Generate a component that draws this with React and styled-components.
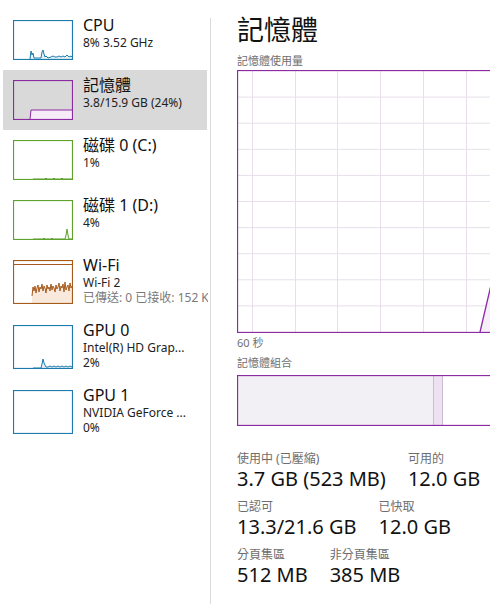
import React from 'react';
import styled, { createGlobalStyle } from 'styled-components';

const GlobalStyle = createGlobalStyle`
    html, body {
        margin: 0;
        padding: 0;
        overflow: hidden;
        background: #ffffff;
    }
    body {
        font-family: "Noto Sans", "Noto Sans CJK TC", sans-serif;
        color: #1a1a1a;
    }
`;

const Page = styled.div`
    display: flex;
    width: 490px;
    height: 604px;
    overflow: hidden;
`;

const Sidebar = styled.div`
    width: 205px;
    flex-shrink: 0;
    padding: 10px 0 0 3px;
    overflow: hidden;
`;

const Divider = styled.div`
    width: 1px;
    flex-shrink: 0;
    margin: 18px 0 0 2px;
    background: #dadada;
`;

const Row = styled.div`
    display: flex;
    align-items: flex-start;
    width: 204px;
    padding: 10px 0 10px 10px;
    box-sizing: border-box;
    background: ${(p) => (p.selected ? '#d9d9d9' : 'transparent')};
`;

const ThumbBox = styled.svg`
    flex-shrink: 0;
    display: block;
`;

const RowText = styled.div`
    margin: -5px 0 0 10px;
    white-space: nowrap;
    min-width: 0;
`;

const RowTitle = styled.div`
    font-size: 16px;
    line-height: 20px;
    color: #111;
`;

const RowSub = styled.div`
    font-size: 12px;
    line-height: 15px;
    color: ${(p) => (p.muted ? '#7a7a7a' : '#222')};
`;

const Main = styled.div`
    flex: 1;
    padding-left: 26px;
    min-width: 0;
`;

const Title = styled.h1`
    margin: 12px 0 0;
    font-size: 27px;
    line-height: 36px;
    font-weight: 400;
    color: #111;
`;

const Caption = styled.div`
    margin-top: ${(p) => p.gap || 0}px;
    font-size: 11px;
    line-height: 16px;
    color: #6f6f6f;
`;

const Chart = styled.svg`
    display: block;
    margin-top: ${(p) => p.gap || 0}px;
`;

const StatRow = styled.div`
    display: flex;
    gap: 22px;
    margin-top: ${(p) => p.gap}px;
`;

const Stat = styled.div`
    display: flex;
    flex-direction: column;
`;

const StatLabel = styled.div`
    font-size: 12px;
    line-height: 14px;
    color: #6d6d6d;
    white-space: nowrap;
`;

const StatValue = styled.div`
    font-size: 20px;
    line-height: 26px;
    color: #111;
    white-space: nowrap;
`;

const Thumb = ({ color, fill, h = 40, points, top }) => {
    const area = points ? `${points} 59,${h - 0.5} ${points.split(' ')[0].split(',')[0]},${h - 0.5}` : null;
    return (
        <ThumbBox width="60" height={h} viewBox={`0 0 60 ${h}`}>
            {area && <polygon points={area} fill={fill} />}
            {top && <line x1="0" y1={top} x2="60" y2={top} stroke={color} strokeWidth="1" />}
            {points && <polyline points={points} fill="none" stroke={color} strokeWidth="1" />}
            <rect x="0.5" y="0.5" width="59" height={h - 1} fill="none" stroke={color} strokeWidth="1.2" />
        </ThumbBox>
    );
};

const wifiPts = (() => {
    const ys = [36, 27, 31, 26, 33, 28, 25, 32, 27, 29, 24, 31, 26, 28, 33, 25, 29, 27, 31, 24, 30, 26, 28, 32, 25, 29, 27, 23, 31, 26, 28, 24, 32, 22, 30, 27, 25, 31, 23, 28, 26];
    return ys.map((y, i) => `${19 + i},${y}`).join(' ');
})();

const items = [
    {
        name: 'CPU',
        lines: ['8% 3.52 GHz'],
        color: '#1c7bab',
        fill: '#e6f1f8',
        points: '17,39 18,31 19,35 20,33 21,38 28,38 29,32 30,30 31,34 32,37 33,36 35,38 38,37 40,36 42,37 44,37 46,36 48,37 50,36 52,37 54,35 56,37 58,36 59,37',
    },
    {
        name: '記憶體',
        lines: ['3.8/15.9 GB (24%)'],
        color: '#8b2aa3',
        fill: '#f6ecf8',
        points: '17,39 18,30 59,30',
        selected: true,
    },
    {
        name: '磁碟 0 (C:)',
        lines: ['1%'],
        color: '#5fa12e',
        fill: '#eef6e7',
        points: '20,39 32,39 33,38 34,39 40,39 41,38 42,39 48,39 49,38 50,39 59,39',
    },
    {
        name: '磁碟 1 (D:)',
        lines: ['4%'],
        color: '#5fa12e',
        fill: '#eef6e7',
        points: '20,39 30,39 31,38 32,39 38,39 39,38 40,39 52,39 53,35 54,29 55,35 56,39 59,39',
    },
    {
        name: 'Wi-Fi',
        lines: ['Wi-Fi 2'],
        muted: '已傳送: 0 已接收: 152 Kbps',
        color: '#a65a1c',
        fill: '#f9e9dd',
        points: wifiPts,
        top: 4.5,
        h: 44,
    },
    {
        name: 'GPU 0',
        lines: ['Intel(R) HD Grap...', '2%'],
        color: '#1c7bab',
        fill: '#e6f1f8',
        points: '20,43 28,43 29,39 30,34 31,38 32,40 33,42 35,42 37,41 39,42 41,41 43,42 45,41 47,42 49,41 51,42 53,41 55,42 57,41 59,42',
        h: 44,
    },
    {
        name: 'GPU 1',
        lines: ['NVIDIA GeForce ...', '0%'],
        color: '#1c7bab',
        fill: '#e6f1f8',
        h: 44,
    },
];

const W = 300;
const H = 263;

const MemoryChart = () => {
    const vLines = [15, 58, 100, 143, 186, 229, 272];
    const hLines = Array.from({ length: 9 }, (_, i) => 1 + (i + 1) * 26.1);
    return (
        <Chart width={W} height={H} viewBox={`0 0 ${W} ${H}`} gap={1}>
            {vLines.map((x) => (
                <line key={x} x1={x + 0.5} y1="0" x2={x + 0.5} y2={H} stroke="#e7dfea" strokeWidth="1" />
            ))}
            {hLines.map((y) => (
                <line key={y} x1="0" y1={y} x2={W} y2={y} stroke="#e7dfea" strokeWidth="1" />
            ))}
            <polygon points={`243,${H - 1} 258,198 ${W},198 ${W},${H - 1}`} fill="#f6eef8" />
            <polyline points={`243,${H - 1} 258,198 ${W},198`} fill="none" stroke="#8b2aa3" strokeWidth="1.3" />
            <rect x="0.5" y="0.5" width={W - 1} height={H - 1} fill="none" stroke="#8b2aa3" strokeWidth="1.3" />
        </Chart>
    );
};

const Composition = () => (
    <Chart width={W} height="51" viewBox={`0 0 ${W} 51`} gap={4}>
        <rect x="0" y="0" width="196" height="51" fill="#f3f0f5" />
        <rect x="196" y="0" width="9" height="51" fill="#ede2f1" />
        <line x1="196.5" y1="0" x2="196.5" y2="51" stroke="#cdbad4" />
        <line x1="205.5" y1="0" x2="205.5" y2="51" stroke="#cdbad4" />
        <rect x="0.5" y="0.5" width={W - 1} height="50" fill="none" stroke="#8b2aa3" strokeWidth="1.3" />
    </Chart>
);

const stats = [
    { gap: 26, cols: [['使用中 (已壓縮)', '3.7 GB (523 MB)'], ['可用的', '12.0 GB']] },
    { gap: 8, cols: [['已認可', '13.3/21.6 GB'], ['已快取', '12.0 GB']] },
    { gap: 8, cols: [['分頁集區', '512 MB'], ['非分頁集區', '385 MB']] },
];

const App = () => {
    return (
        <Page>
            <GlobalStyle />
            <Sidebar>
                {items.map((item) => (
                    <Row key={item.name} selected={item.selected}>
                        <Thumb color={item.color} fill={item.fill} h={item.h} points={item.points} top={item.top} />
                        <RowText>
                            <RowTitle>{item.name}</RowTitle>
                            {item.lines.map((l) => (
                                <RowSub key={l}>{l}</RowSub>
                            ))}
                            {item.muted && <RowSub muted>{item.muted}</RowSub>}
                        </RowText>
                    </Row>
                ))}
            </Sidebar>
            <Divider />
            <Main>
                <Title>記憶體</Title>
                <Caption gap={5}>記憶體使用量</Caption>
                <MemoryChart />
                <Caption gap={2}>60 秒</Caption>
                <Caption gap={4}>記憶體組合</Caption>
                <Composition />
                {stats.map((row, i) => (
                    <StatRow key={i} gap={row.gap}>
                        {row.cols.map(([label, value]) => (
                            <Stat key={label}>
                                <StatLabel>{label}</StatLabel>
                                <StatValue>{value}</StatValue>
                            </Stat>
                        ))}
                    </StatRow>
                ))}
            </Main>
        </Page>
    );
};

export default App;
